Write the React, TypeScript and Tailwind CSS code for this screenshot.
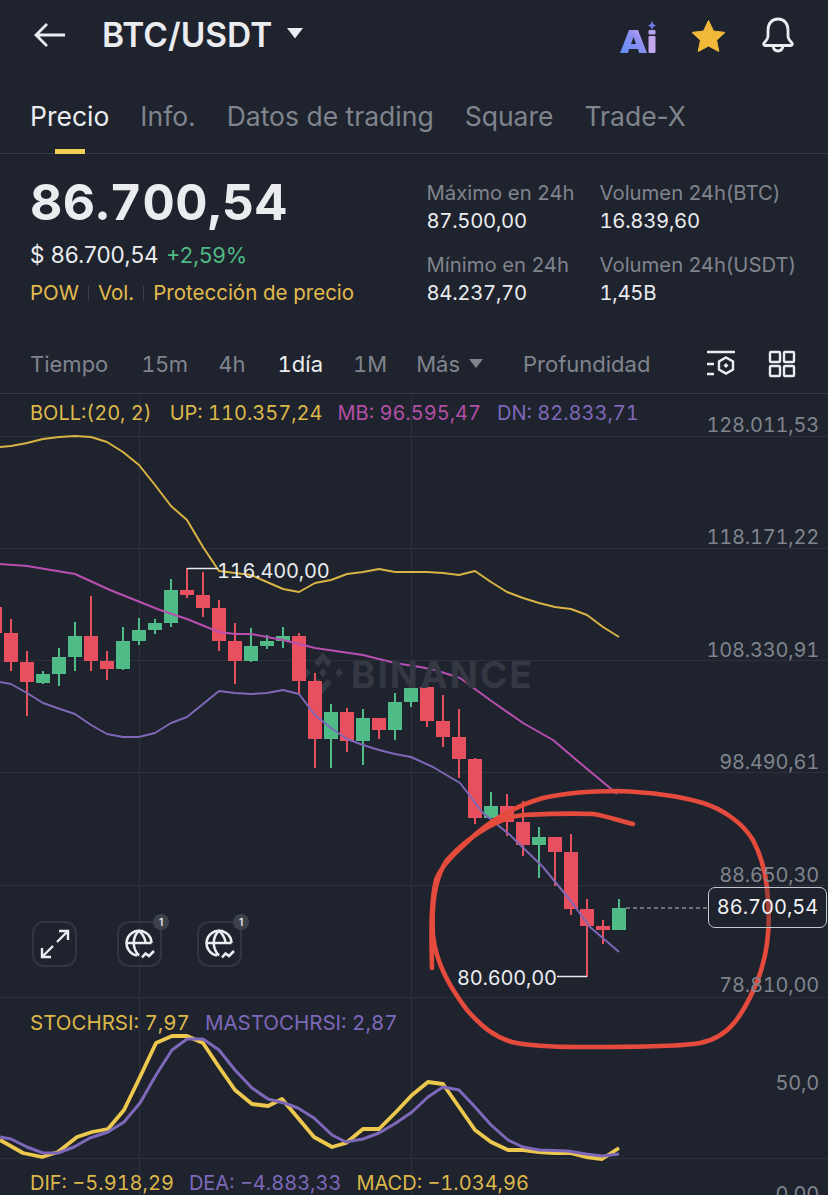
const FONT = "font-['Inter','Liberation_Sans',sans-serif]";

type C = [number, number, number, number, number]; // x, bodyTop, bodyBottom, wickTop, wickBottom
const red: C[] = [
  [-5, 607, 633, 596, 640], [11, 633, 662, 619, 671], [27, 662, 682, 651, 716], [91, 636, 661, 596, 671],
  [107, 661, 669, 651, 680], [187, 590, 595, 568, 598], [203, 595, 608, 572, 617], [219, 608, 641, 600, 651],
  [235, 641, 661, 623, 684], [299, 636, 681, 633, 694], [315, 681, 739, 673, 768], [347, 712, 741, 708, 752],
  [379, 718, 730, 718, 739], [427, 687, 721, 680, 727], [443, 721, 737, 695, 747], [459, 737, 759, 709, 778],
  [475, 759, 818, 758, 824], [507, 806, 822, 794, 836], [523, 822, 845, 801, 856], [555, 837, 852, 837, 886],
  [571, 852, 909, 834, 915], [587, 909, 926, 899, 977], [603, 926, 930, 920, 944],
];
const green: C[] = [
  [43, 674, 683, 671, 684], [59, 657, 674, 648, 686], [75, 636, 657, 622, 671], [123, 641, 669, 627, 670],
  [139, 630, 641, 618, 645], [155, 623, 630, 619, 634], [171, 590, 623, 579, 627], [251, 646, 661, 628, 662],
  [267, 641, 646, 635, 649], [283, 636, 641, 627, 648], [331, 712, 739, 704, 768], [363, 718, 741, 709, 765],
  [395, 702, 730, 693, 740], [411, 688, 702, 680, 707], [491, 806, 818, 792, 818], [539, 837, 845, 827, 878],
  [619, 908, 930, 899, 930],
];
const TOP = 394;
const y = (v: number) => v - TOP;
const pts = (a: number[][]) => a.map(([px, py]) => `${px},${py - TOP}`).join(" ");

const up = [[0,447],[11,446],[27,443],[43,439],[59,437],[75,436],[91,437],[107,442],[123,452],[139,465],[155,485],[171,506],[187,520],[203,547],[219,571],[235,573],[251,575],[267,582],[283,589],[299,592],[315,583],[331,580],[347,574],[363,572],[379,569],[395,572],[411,572],[427,572],[443,573],[459,575],[475,571],[491,582],[507,592],[523,598],[539,603],[555,607],[571,609],[587,615],[603,627],[619,637]];
const mb = [[0,564],[27,566],[75,574],[110,590],[160,610],[187,619],[219,632],[235,634],[251,634],[283,640],[315,648],[363,655],[395,663],[420,667],[435,670],[460,678],[490,700],[523,723],[553,740],[580,763],[610,788],[617,794]];
const dn = [[0,682],[11,684],[27,693],[43,703],[60,709],[75,714],[91,725],[107,734],[123,737],[139,737],[155,733],[171,723],[187,717],[203,704],[219,691],[235,693],[251,694],[267,693],[283,690],[299,694],[315,715],[331,728],[347,739],[363,745],[379,750],[395,754],[411,757],[433,767],[460,783],[483,813],[510,835],[543,867],[570,900],[590,927],[619,952]];
const sy = [[0,1140],[23,1153],[42,1157],[58,1152],[77,1137],[92,1132],[108,1129],[124,1110],[140,1077],[156,1043],[172,1036],[187,1036],[203,1043],[219,1067],[235,1090],[252,1104],[268,1106],[282,1099],[298,1118],[314,1137],[332,1147],[346,1143],[363,1129],[379,1129],[396,1112],[412,1095],[428,1082],[443,1084],[459,1107],[475,1130],[491,1142],[508,1150],[523,1150],[539,1152],[554,1153],[570,1153],[586,1157],[602,1159],[619,1148]];
const sp = [[0,1137],[11,1139],[27,1147],[43,1153],[58,1153],[74,1147],[90,1138],[108,1132],[124,1122],[140,1103],[156,1075],[172,1050],[187,1039],[203,1039],[219,1050],[235,1070],[252,1088],[268,1099],[284,1103],[298,1108],[314,1118],[332,1135],[346,1142],[363,1139],[379,1133],[396,1123],[412,1112],[428,1097],[443,1087],[459,1090],[475,1107],[491,1125],[508,1140],[523,1147],[539,1150],[568,1151],[586,1154],[602,1156],[619,1154]];
const GRID = [436, 548, 660, 772, 885, 997, 1158];

function Globe() {
  return (
    <svg width="34" height="34" viewBox="0 0 34 34" fill="none" stroke="#eaecef" strokeWidth="2.500">
      <path d="M14 28.500A12.500 12.500 0 1 1 28.500 16" />
      <path d="M16 3.500c-7 7-7 18 0 25M16 3.500c5 5 6.500 9 6.500 13M3.500 16h25" />
      <path d="M19 30.500l3.500-4 3.500 2.500 5-5" strokeWidth="2.600" />
    </svg>
  );
}

function GlobeBtn() {
  return (
    <div className="relative w-[45px] h-[46px] rounded-[12px] border-2 border-[#32363f] flex items-center justify-center">
      <Globe />
      <span className="absolute -top-[9px] -right-[9px] w-[16px] h-[16px] rounded-full bg-[#3d414b] text-[#eaecef] text-[10px] font-semibold flex items-center justify-center">1</span>
    </div>
  );
}

const Axis = ({ t, top, right = 9 }: { t: string; top: number; right?: number }) => (
  <span className="absolute tabular-nums text-[20px] leading-[24px] text-[#7f848d] tracking-[-0.2px]" style={{ top: top - 393 - 12, right }}>{t}</span>
);

const Stat = ({ label, value }: { label: string; value: string }) => (
  <div className="text-[#7f848d]">
    {label}
    <div className="text-[#eaecef] tabular-nums tracking-[-0.3px]">{value}</div>
  </div>
);

export default function App() {
  return (
    <div className={`w-[828px] h-[1195px] overflow-hidden bg-[#1f232e] ${FONT}`}>
      {/* top bar */}
      <header className="h-[70px] flex items-center pl-[34px] pr-[33px]">
        <svg width="32" height="26" viewBox="0 0 32 26" fill="none" stroke="#eaecef" strokeWidth="2.800" className="mt-[-1px]">
          <path d="M31 13H2M13 2 2 13l11 11" />
        </svg>
        <span className="ml-[36px] text-[33.500px] leading-[38px] font-semibold text-[#eaecef]">BTC/USDT</span>
        <svg width="18" height="12" viewBox="0 0 18 12" className="ml-[14px] mt-[-4px]"><path d="M1 1h16L9 11.500z" fill="#eaecef" /></svg>
        <div className="ml-auto flex items-center">
          <svg width="38" height="36" viewBox="0 0 38 36" className="mr-[34px] mt-[4px]">
            <defs>
              <linearGradient id="aig" x1="0" y1="1" x2="1" y2="0">
                <stop offset="0" stopColor="#5f8cf5" />
                <stop offset="0.6" stopColor="#8f8ff0" />
                <stop offset="1" stopColor="#c8a6f0" />
              </linearGradient>
            </defs>
            <path d="M1 34 10 11h9l9 23h-8l-1-4h-9l-1 4zM12 25h5l-2.500-7z" fill="url(#aig)" fillRule="evenodd" />
            <rect x="29.500" y="17" width="7" height="17" rx="1" fill="#c2a6ee" />
            <rect x="29.500" y="11" width="7" height="4.500" rx="1" fill="#b7a4ee" />
            <path d="M33 1c.6 3.500 1.500 4.500 4 5.500-2.500 1-3.400 2-4 5.500-.6-3.500-1.500-4.500-4-5.500 2.500-1 3.400-2 4-5.500z" fill="#6f7ae8" />
          </svg>
          <svg width="35" height="33" viewBox="0 0 35 33" className="mr-[35px]">
            <path d="M17.500 1.500l5 10.500 11.500 1.400-8.400 7.800 2.200 11.300-10.300-5.500-10.300 5.500 2.200-11.300L1 13.400 12.500 12z" fill="#f0b93a" stroke="#f0b93a" strokeLinejoin="round" />
          </svg>
          <svg width="34" height="36" viewBox="0 0 34 36" fill="none" stroke="#eaecef" strokeWidth="2.800" strokeLinejoin="round">
            <path d="M17 2C10.500 2 7 7 7 13v6c0 2.500-2 5-4 7-.8 1-.3 2.500 1 2.500h26c1.300 0 1.800-1.500 1-2.500-2-2-4-4.500-4-7v-6c0-6-3.500-11-10-11z" />
            <path d="M12 29c.5 3 2.500 5 5 5s4.500-2 5-5" />
          </svg>
        </div>
      </header>

      {/* tabs */}
      <nav className="h-[84px] border-b border-[#343842] flex pl-[30px] gap-[31px] pt-[29px] text-[26.500px] leading-[34px] text-[#7f848d]">
        <div className="relative text-[#eaecef]">
          Precio
          <span className="absolute left-[25px] w-[30px] h-[5px] top-[50px] bg-[#f0cf55]" />
        </div>
        <div>Info.</div>
        <div>Datos de trading</div>
        <div>Square</div>
        <div>Trade-X</div>
      </nav>

      {/* price summary */}
      <section className="h-[188px] flex justify-between pl-[30px] pr-[32px] pt-[19px]">
        <div>
          <div className="text-[50px] leading-[58px] font-bold text-[#eaecef] tracking-[0.5px] tabular-nums">86.700,54</div>
          <div className="mt-[9px] text-[22.500px] leading-[30px] text-[#eaecef] whitespace-nowrap">
            $ 86.700,54 <span className="text-[#4fb985] text-[21.800px] ml-[1px]">+2,59%</span>
          </div>
          <div className="mt-[9px] flex items-center text-[20.500px] leading-[28px] text-[#e3bb4c]">
            POW<span className="w-px h-[14px] bg-[#3a3e48] mx-[9px]" />Vol.<span className="w-px h-[14px] bg-[#3a3e48] mx-[9px]" />Protección de precio
          </div>
        </div>
        <div className="grid grid-cols-[173px_auto] grid-rows-[72px_72px] text-[20.300px] leading-[28px] pt-[6px]">
          <Stat label="Máximo en 24h" value="87.500,00" />
          <Stat label="Volumen 24h(BTC)" value="16.839,60" />
          <Stat label="Mínimo en 24h" value="84.237,70" />
          <Stat label="Volumen 24h(USDT)" value="1,45B" />
        </div>
      </section>

      {/* interval row */}
      <div className="h-[51px] flex items-start pl-[30px] pr-[32px] pt-[7px] text-[22px] leading-[30px] text-[#7f848d]">
        <span>Tiempo</span>
        <span className="ml-[33px] tabular-nums tracking-[-0.6px]">15m</span>
        <span className="ml-[31px] tabular-nums">4h</span>
        <span className="ml-[32px] text-[#eaecef] tabular-nums">1día</span>
        <span className="ml-[30px] tabular-nums">1M</span>
        <span className="ml-[29px]">Más</span>
        <svg width="16" height="11" viewBox="0 0 16 11" className="ml-[8px] mt-[9px]"><path d="M1 1h14L8 10z" fill="#7f848d" /></svg>
        <span className="ml-[39px]">Profundidad</span>
        <svg width="30" height="28" viewBox="0 0 30 28" fill="none" stroke="#eaecef" strokeWidth="2.400" className="ml-auto mt-[1px]">
          <path d="M1 2h28M1 14h7M1 24h7" />
          <path d="M20 7.500l7 4v8l-7 4-7-4v-8z" />
          <path d="M20 13l2.500 2.500L20 18l-2.500-2.500z" fill="#eaecef" stroke="none" />
        </svg>
        <svg width="28" height="28" viewBox="0 0 28 28" fill="none" stroke="#eaecef" strokeWidth="2.400" className="ml-[32px] mt-[1px]">
          <rect x="2" y="2" width="10" height="10" rx="1" />
          <rect x="16" y="2" width="10" height="10" rx="1" />
          <rect x="2" y="16" width="10" height="10" rx="1" />
          <rect x="16" y="16" width="10" height="10" rx="1" />
        </svg>
      </div>

      {/* chart */}
      <section className="relative h-[802px] border-t border-[#343842] overflow-hidden">
        <svg width="828" height="802" viewBox="0 0 828 802" className="absolute left-0 top-0" fill="none">
          {GRID.map((g) => <line key={g} x1="0" x2="828" y1={y(g) + 0.5} y2={y(g) + 0.5} stroke="#2d313b" />)}
          <line x1="139.500" x2="139.500" y1="0" y2="802" stroke="#2d313b" />
          <line x1="411.500" x2="411.500" y1="0" y2="802" stroke="#2d313b" />
          {/* Binance watermark mark */}
          <g transform={`translate(303 ${y(652)}) scale(0.950 1.150)`} fill="#343843">
            <path d="M21 0l9 9-4 4-5-5-5 5-4-4zM4 14l4 4-4 4-4-4zM38 14l4 4-4 4-4-4zM21 14l4 4-4 4-4-4zM21 36l-9-9 4-4 5 5 5-5 4 4z" />
          </g>
          {red.map(([cx, bt, bb, wt, wb]) => (
            <g key={cx} fill="#e9505f">
              <rect x={cx - 1} y={y(wt)} width="2" height={wb - wt} />
              <rect x={cx - 7} y={y(bt)} width="14" height={bb - bt} />
            </g>
          ))}
          {green.map(([cx, bt, bb, wt, wb]) => (
            <g key={cx} fill="#4fbb87">
              <rect x={cx - 1} y={y(wt)} width="2" height={wb - wt} />
              <rect x={cx - 7} y={y(bt)} width="14" height={bb - bt} />
            </g>
          ))}
          <polyline points={pts(up)} stroke="#d9b343" strokeWidth="2" strokeLinejoin="round" />
          <polyline points={pts(mb)} stroke="#b94fb0" strokeWidth="2" strokeLinejoin="round" />
          <polyline points={pts(dn)} stroke="#7f67b8" strokeWidth="2" strokeLinejoin="round" />
          <polyline points={pts(sy)} stroke="#edc84e" strokeWidth="3.800" strokeLinejoin="round" />
          <polyline points={pts(sp)} stroke="#7e68b9" strokeWidth="3" strokeLinejoin="round" />
          {/* high / low leaders */}
          <path d={`M187.500 ${y(568)}V${y(568.5)}H218`} stroke="#e6e8ea" strokeWidth="1.500" />
          <path d={`M557 ${y(976.5)}H587`} stroke="#e6e8ea" strokeWidth="1.500" />
          {/* last price dash */}
          <line x1="626" x2="707" y1={y(908)} y2={y(908)} stroke="#b9bcc2" strokeWidth="1.200" strokeDasharray="4 3" />
          {/* hand-drawn circle */}
          <path
            d={`M432 ${y(968)}C431 ${y(930)} 431 ${y(900)} 436 ${y(880)}C441 ${y(865)} 458 ${y(850)} 477 ${y(833)}C495 ${y(818)} 515 ${y(806)} 543 ${y(798)}C565 ${y(793)} 590 ${y(791)} 617 ${y(791)}C645 ${y(792)} 680 ${y(796)} 703 ${y(803)}C722 ${y(809)} 742 ${y(822)} 753 ${y(840)}C762 ${y(857)} 767 ${y(880)} 768 ${y(900)}C770 ${y(925)} 767 ${y(950)} 762 ${y(967)}C757 ${y(985)} 745 ${y(1010)} 734 ${y(1023)}C725 ${y(1034)} 715 ${y(1040)} 700 ${y(1043)}C680 ${y(1047)} 620 ${y(1047)} 581 ${y(1047)}C550 ${y(1047)} 525 ${y(1045)} 512 ${y(1042)}C495 ${y(1037)} 483 ${y(1028)} 467 ${y(1010)}C452 ${y(990)} 436 ${y(965)} 433 ${y(935)}C431 ${y(900)} 437 ${y(875)} 447 ${y(860)}C465 ${y(840)} 495 ${y(818)} 523 ${y(815)}C545 ${y(814)} 575 ${y(813)} 593 ${y(814)}C607 ${y(816)} 620 ${y(821)} 633 ${y(824)}`}
            stroke="#e44b3c"
            strokeWidth="4.600"
            strokeLinecap="round"
            strokeLinejoin="round"
          />
        </svg>

        {/* watermark word */}
        <span className="absolute left-[351px] top-[260px] text-[37px] leading-[42px] font-bold text-[#343843] tracking-[2px]">BINANCE</span>

        {/* legends */}
        <div className="absolute left-[30px] top-[6px] flex gap-[16px] text-[20px] leading-[26px] whitespace-nowrap tabular-nums">
          <span className="text-[#dcb84a] mr-[2px]">BOLL:(20, 2)</span>
          <span className="text-[#dcb84a] mr-[-1px]">UP: 110.357,24</span>
          <span className="text-[#b34fa6]">MB: 96.595,47</span>
          <span className="text-[#7e68b9]">DN: 82.833,71</span>
        </div>
        <div className="absolute left-[30px] top-[616px] flex gap-[15px] text-[20.500px] leading-[26px] whitespace-nowrap tabular-nums">
          <span className="text-[#dcb84a]">STOCHRSI: 7,97</span>
          <span className="text-[#7e68b9]">MASTOCHRSI: 2,87</span>
        </div>
        <div className="absolute left-[30px] top-[776px] flex gap-[15px] text-[20px] leading-[26px] whitespace-nowrap tabular-nums">
          <span className="text-[#dcb84a]">DIF: −5.918,29</span>
          <span className="text-[#7e68b9]">DEA: −4.883,33</span>
          <span className="text-[#dcb84a]">MACD: −1.034,96</span>
        </div>

        {/* axis */}
        <Axis t="128.011,53" top={424} />
        <Axis t="118.171,22" top={536} />
        <Axis t="108.330,91" top={649} />
        <Axis t="98.490,61" top={761} />
        <Axis t="88.650,30" top={874} />
        <Axis t="78.810,00" top={984} />
        <Axis t="50,0" top={1082} />
        <Axis t="0,00" top={1193} />

        {/* chart labels */}
        <span className="absolute left-[217px] top-[164px] text-[20px] leading-[26px] text-[#eaecef] tabular-nums tracking-[-0.2px]">116.400,00</span>
        <span className="absolute left-[457px] top-[571px] text-[20px] leading-[26px] text-[#eaecef] tabular-nums tracking-[-0.2px]">80.600,00</span>
        <span className="absolute right-[1px] top-[493px] w-[119px] h-[41px] rounded-[7px] border border-[#c5c8cd] bg-[#1f232e]/30 text-[20px] leading-[39px] text-center text-[#f2f3f5] tabular-nums">86.700,54</span>

        {/* chart tools */}
        <div className="absolute left-[32px] top-[527px] flex">
          <div className="w-[45px] h-[46px] rounded-[12px] border-2 border-[#32363f] flex items-center justify-center">
            <svg width="30" height="30" viewBox="0 0 30 30" fill="none" stroke="#eaecef" strokeWidth="2.400">
              <path d="M17 13 28 2M19 2h9v9M13 17 2 28M2 19v9h9" />
            </svg>
          </div>
          <div className="ml-[40px]"><GlobeBtn /></div>
          <div className="ml-[35px]"><GlobeBtn /></div>
        </div>
      </section>
    </div>
  );
}
